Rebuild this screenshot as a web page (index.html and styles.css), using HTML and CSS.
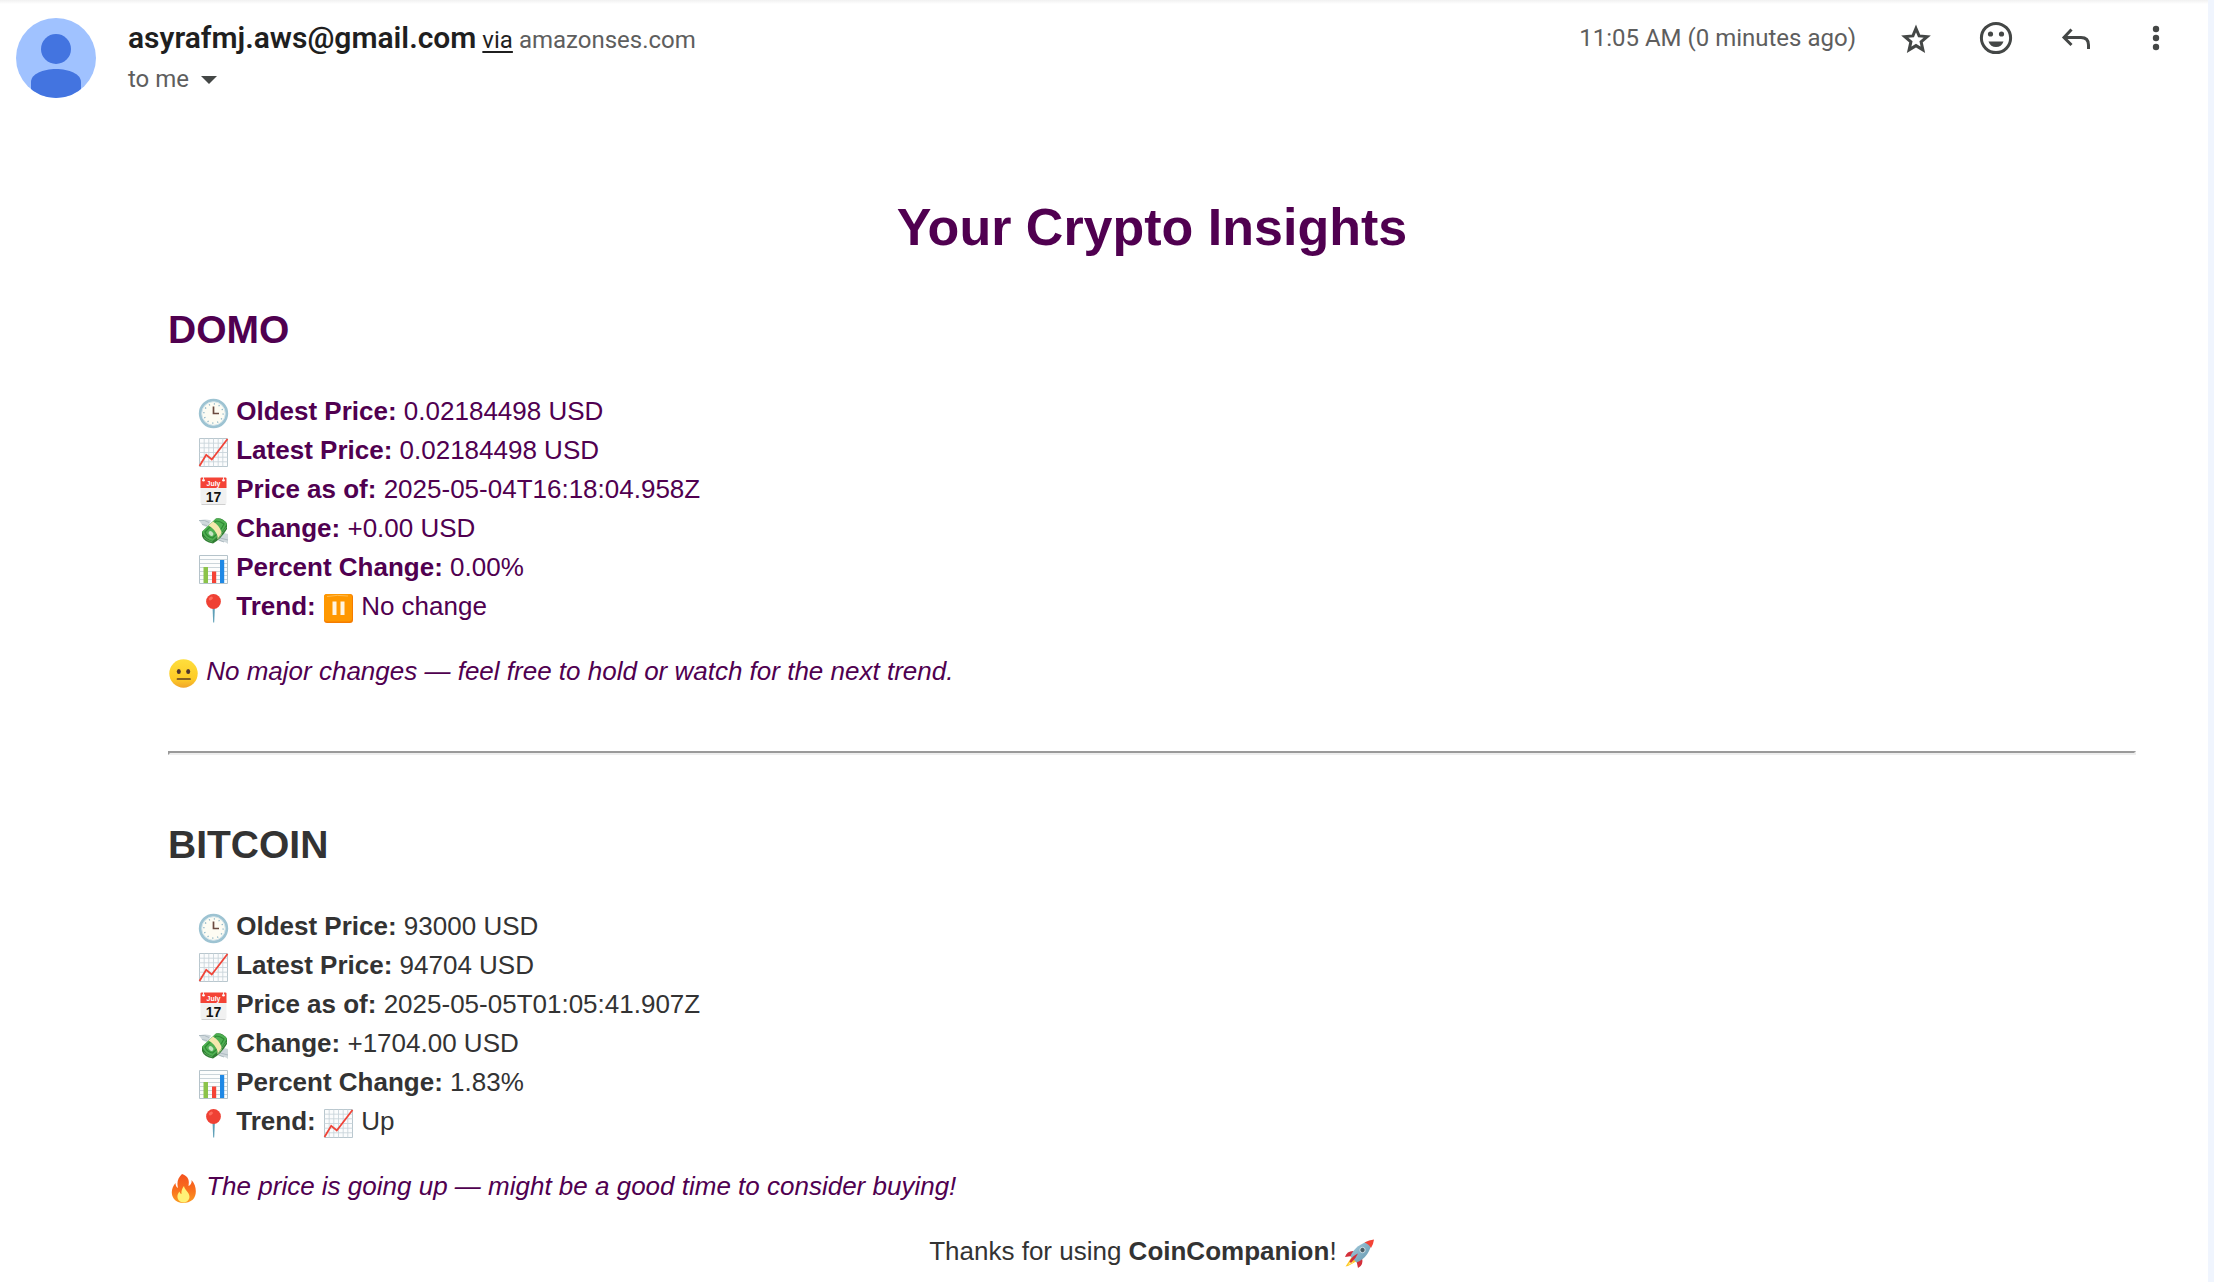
FILE: index.html
```html
<!DOCTYPE html>
<html lang="en">
<head>
<meta charset="utf-8">
<meta name="viewport" content="width=device-width, initial-scale=1">
<title>Your Crypto Insights</title>
<link rel="stylesheet" href="styles.css">
</head>
<body>
<svg class="sprite" aria-hidden="true">
  <defs>
    <linearGradient id="g-fire" x1="0" y1="0" x2="0" y2="1"><stop offset="0" stop-color="#f4511e"/><stop offset=".55" stop-color="#f9701d"/><stop offset="1" stop-color="#fb9b21"/></linearGradient>
    <linearGradient id="g-face" x1="0" y1="0" x2="0" y2="1"><stop offset="0" stop-color="#fede3d"/><stop offset=".7" stop-color="#fdcb26"/><stop offset="1" stop-color="#f0a42c"/></linearGradient>
    <linearGradient id="g-rocket" x1="0" y1="0" x2="1" y2="1"><stop offset="0" stop-color="#a9cfe0"/><stop offset="1" stop-color="#5f93ab"/></linearGradient>
    <symbol id="clock" viewBox="0 0 31 31">
      <circle cx="15.5" cy="15.5" r="13.2" fill="#fdfcf3" stroke="#9dc3d2" stroke-width="3"/>
      <circle cx="15.5" cy="15.5" r="11.8" fill="none" stroke="#d5e6ec" stroke-width="1"/>
      <circle cx="15.5" cy="15.5" r="9.6" fill="none" stroke="#8fb6c8" stroke-width="1.4" stroke-dasharray="1.2 3.827"/>
      <path d="M15.500 8.500V15.500H21" fill="none" stroke="#6b4a40" stroke-width="1.700"/>
    </symbol>
    <symbol id="chart-up" viewBox="0 0 31 31">
      <path d="M1.500 1.500h28v28h-28z" fill="#fbfcfd" stroke="#b9c7ce" stroke-width="1"/>
      <path d="M6.200 1.500v28M10.800 1.500v28M15.500 1.500v28M20.200 1.500v28M24.800 1.500v28M1.500 6.200h28M1.500 10.800h28M1.500 15.500h28M1.500 20.200h28M1.500 24.800h28" stroke="#c9d5db" stroke-width=".9"/>
      <path d="M1.500 29L8.200 17.800L13.800 22.500L29.500 2" fill="none" stroke="#f04438" stroke-width="1.800"/>
    </symbol>
    <symbol id="calendar" viewBox="0 0 31 31">
      <path d="M2.500 8h26v18.500a2 2 0 0 1-2 2h-22a2 2 0 0 1-2-2z" fill="#f1f1f1"/>
      <path d="M3.500 28.500h24" stroke="#cfcfcf" stroke-width="1"/>
      <path d="M3.500 1.500h24a1 1 0 0 1 1 1v9.500h-26v-9.500a1 1 0 0 1 1-1z" fill="#f44336"/>
      <circle cx="5.500" cy="4.200" r="1.300" fill="#fff"/><circle cx="25.500" cy="4.200" r="1.300" fill="#fff"/>
      <path d="M5.500 4V1M25.500 4V1" stroke="#eee" stroke-width="1"/>
      <text x="15.500" y="9.500" class="cal-month">July</text>
      <text x="15.500" y="25.500" class="cal-day">17</text>
    </symbol>
    <symbol id="money" viewBox="0 0 31 31">
      <path d="M1 5.500q6-2 12 0l-3 7q-4-1-6-3zM18 22q5 0 8-4l4 1v10q-2-2-4-2t-7-2z" fill="#cfd8dc"/>
      <path d="M1 5.500q6-1 10 2M4 9.500l5 1M22 23l8 2M21 25l5 2" stroke="#aebbc2" fill="none"/>
      <path d="M4 17L18 3.500Q24 2 29 8.500V14Q23 24 15 28.500Q6 27 4 21z" fill="#2f7d32"/>
      <path d="M4 16.500L18 3.500Q24 3 29 8.500Q24 19 14.500 26Q7 24 4 16.500z" fill="#4fb052"/>
      <path d="M7 17L18 6Q22 6 26 9Q22 17 14.500 23Q9 22 7 17z" fill="none" stroke="#2f8b35" stroke-width="1.200"/>
      <path d="M10.500 10.500L15 6.500Q21 10 23.500 17V20L19.500 24.500V21Q17 14 10.500 10.500z" fill="#f6e8ae"/>
      <ellipse cx="13" cy="18.500" rx="2.700" ry="2" fill="#c6e5c3" transform="rotate(40 13 18.500)"/>
      <path d="M6 22.500Q10 26 14.500 27M20 23.500L28.500 12" fill="none" stroke="#66b268" stroke-width=".8"/>
    </symbol>
    <symbol id="bars" viewBox="0 0 31 31">
      <path d="M1.500 1.500h28v28h-28z" fill="#fcfdfd" stroke="#b5c3ca"/>
      <path d="M2 5.500h27M2 9.500h27M2 13.500h27M2 17.500h27M2 21.500h27M2 25.500h27" stroke="#cbd5da" stroke-width="1"/>
      <path d="M5.500 13h4.500v16h-4.500z" fill="#8bc34a"/><path d="M14 17.500h4.200v11.500h-4.200z" fill="#f44336"/><path d="M22 6h4.200v23h-4.200z" fill="#1e88e5"/>
    </symbol>
    <symbol id="pin" viewBox="0 0 31 31">
      <path d="M14.500 14h2.400l-.7 15.500h-1z" fill="#5fa0b8"/>
      <circle cx="15.500" cy="8.500" r="7.400" fill="#ef4134"/>
      <ellipse cx="12.800" cy="5.500" rx="2.300" ry="1.500" fill="#ff6b5c" transform="rotate(-35 12.800 5.500)"/>
    </symbol>
    <symbol id="pause" viewBox="0 0 31 31">
      <rect x="1" y="1" width="29" height="29" rx="3" fill="#f57c00"/>
      <rect x="1" y="1" width="28" height="27.500" rx="3" fill="#ff9800"/>
      <path d="M4 3.500Q14 1.500 25 3" stroke="#ffbd52" stroke-width="1" fill="none"/>
      <path d="M9.500 8.500h4v13.500h-4zM17.500 8.500h4v13.500h-4z" fill="#fff5e2"/>
    </symbol>
    <symbol id="neutral" viewBox="0 0 31 31">
      <circle cx="15.500" cy="15.500" r="14.200" fill="url(#g-face)"/>
      <ellipse cx="10.800" cy="13.500" rx="2" ry="2.500" fill="#4e342e"/><ellipse cx="20.200" cy="13.500" rx="2" ry="2.500" fill="#4e342e"/>
      <path d="M9.500 21h12.500" stroke="#5a3b20" stroke-width="1.700" stroke-linecap="round"/>
    </symbol>
    <symbol id="fire" viewBox="0 0 31 31">
      <path d="M14 1C22 4 21 9 20.500 13C23 12 24 9.500 23.500 7C29 13 29 22 25 26.500C19 31.500 10 31 6 26C2 20.500 4 14 7.500 10C7.500 12.500 8.500 14.500 10 15C8.500 9 10 5 14 1z" fill="url(#g-fire)"/>
      <path d="M16 13C16.500 17 21.500 19 21.500 24C21 28 18 29.500 15.500 29.500C11 29 9 26 9.500 22.500C9.800 20.500 10.800 19.500 11.500 18.500C11.800 20 12.500 21 13.500 21C13 17.500 14.500 15 16 13z" fill="#fff176"/>
    </symbol>
    <symbol id="rocket" viewBox="0 0 31 31">
      <path d="M9 17L1.500 28.500L4 28L13 23z" fill="#ffca28"/>
      <path d="M7 23L4 27L9 24.500z" fill="#fff59d"/>
      <path d="M11 13Q3 12 1 19L8 18zM18 20Q20 27 14 30L12.500 23z" fill="#d32f3a"/>
      <path d="M6.500 18.500Q11 6 28 2.500Q26 19 12.500 24.500z" fill="url(#g-rocket)"/>
      <path d="M20.500 4.500Q25 2 30 1.500Q29.500 6 27 10Q25 6 20.500 4.500z" fill="#f44336"/>
      <circle cx="18.500" cy="12" r="2.700" fill="#4b5f68" stroke="#dbe9ee" stroke-width=".9"/>
      <path d="M5.500 23.500Q8 18 14 15.500Q12 20.500 7 25z" fill="#d32f3a"/>
    </symbol>
  </defs>
</svg>

<main class="message">
  <header class="message-header">
    <svg class="avatar" viewBox="0 0 80 80" role="img" aria-label="Profile picture">
      <clipPath id="avatar-clip"><circle cx="40" cy="40" r="40"/></clipPath>
      <g clip-path="url(#avatar-clip)">
        <path d="M0 0h80v80H0z" fill="#a0c2ff"/>
        <circle cx="40" cy="31" r="15" fill="#4374e0"/>
        <path d="M15 80V64C15 56 27 51 40 51S65 56 65 64V80z" fill="#4374e0"/>
      </g>
    </svg>
    <div class="sender">
      <div class="sender-line">
        <span class="sender-address">asyrafmj.aws@gmail.com</span>
        <a class="via" href="#via">via</a>
        <span class="relay">amazonses.com</span>
      </div>
      <button class="recipient" type="button">to me
        <svg class="caret" viewBox="0 0 16 8" aria-hidden="true"><path d="M0 0h16l-8 8z" fill="#444746"/></svg>
      </button>
    </div>
    <div class="actions">
      <time class="sent">11:05 AM (0 minutes ago)</time>
      <button class="icon-button" type="button" aria-label="Star">
        <svg viewBox="0 0 40 40"><path d="M20 9.500L23.100 16.900L31.200 17.600L25.100 22.900L26.900 30.800L20 26.600L13.100 30.800L14.900 22.900L8.800 17.600L16.900 16.900z" transform="translate(0 1)" fill="none" stroke="#444746" stroke-width="3"/></svg>
      </button>
      <button class="icon-button" type="button" aria-label="Add reaction">
        <svg viewBox="0 0 40 40"><circle cx="20" cy="20" r="14.600" fill="none" stroke="#444746" stroke-width="3"/><circle cx="14.500" cy="16" r="2.600" fill="#444746"/><circle cx="25.500" cy="16" r="2.600" fill="#444746"/><path d="M12.500 23.500h15q-2 5.500-7.500 5.500t-7.500-5.500z" fill="#444746"/></svg>
      </button>
      <button class="icon-button" type="button" aria-label="Reply">
        <svg viewBox="0 0 40 40"><path d="M15.500 11.500L8 19.500L15.500 27M8 19.500H25Q32.500 19.500 32.500 27V31" fill="none" stroke="#444746" stroke-width="3"/></svg>
      </button>
      <button class="icon-button" type="button" aria-label="More">
        <svg viewBox="0 0 40 40"><circle cx="20" cy="11" r="3.200" fill="#444746"/><circle cx="20" cy="20" r="3.200" fill="#444746"/><circle cx="20" cy="29" r="3.200" fill="#444746"/></svg>
      </button>
    </div>
  </header>

  <article class="email">
    <h1 class="title">Your Crypto Insights</h1>

    <section class="coin quoted">
      <h2 class="coin-name">DOMO</h2>
      <ul class="facts">
        <li><svg class="emoji"><use href="#clock"/></svg> <strong>Oldest Price:</strong> 0.02184498 USD</li>
        <li><svg class="emoji"><use href="#chart-up"/></svg> <strong>Latest Price:</strong> 0.02184498 USD</li>
        <li><svg class="emoji"><use href="#calendar"/></svg> <strong>Price as of:</strong> 2025-05-04T16:18:04.958Z</li>
        <li><svg class="emoji"><use href="#money"/></svg> <strong>Change:</strong> +0.00 USD</li>
        <li><svg class="emoji"><use href="#bars"/></svg> <strong>Percent Change:</strong> 0.00%</li>
        <li><svg class="emoji"><use href="#pin"/></svg> <strong>Trend:</strong> <svg class="emoji"><use href="#pause"/></svg> No change</li>
      </ul>
      <p class="advice"><svg class="emoji"><use href="#neutral"/></svg> <em>No major changes — feel free to hold or watch for the next trend.</em></p>
    </section>

    <hr class="divider">

    <section class="coin">
      <h2 class="coin-name">BITCOIN</h2>
      <ul class="facts">
        <li><svg class="emoji"><use href="#clock"/></svg> <strong>Oldest Price:</strong> 93000 USD</li>
        <li><svg class="emoji"><use href="#chart-up"/></svg> <strong>Latest Price:</strong> 94704 USD</li>
        <li><svg class="emoji"><use href="#calendar"/></svg> <strong>Price as of:</strong> 2025-05-05T01:05:41.907Z</li>
        <li><svg class="emoji"><use href="#money"/></svg> <strong>Change:</strong> +1704.00 USD</li>
        <li><svg class="emoji"><use href="#bars"/></svg> <strong>Percent Change:</strong> 1.83%</li>
        <li><svg class="emoji"><use href="#pin"/></svg> <strong>Trend:</strong> <svg class="emoji"><use href="#chart-up"/></svg> Up</li>
      </ul>
      <p class="advice"><svg class="emoji"><use href="#fire"/></svg> <em>The price is going up — might be a good time to consider buying!</em></p>
    </section>

    <p class="thanks">Thanks for using <strong>CoinCompanion</strong>! <svg class="emoji"><use href="#rocket"/></svg></p>
  </article>
</main>
</body>
</html>
```
FILE: styles.css
```css
* {
  box-sizing: border-box;
}

body {
  margin: 0;
  padding-right: 6px;
  background: #f0f5fe;
  font-family: "Liberation Sans", Arial, sans-serif;
}

.sprite {
  position: absolute;
  width: 0;
  height: 0;
}

.message {
  min-height: 100vh;
  background: linear-gradient(#f1f1f1, #fff 4px);
}

.message-header {
  display: flex;
  align-items: flex-start;
  padding: 18px 32px 0 16px;
  font-family: Roboto, sans-serif;
  font-size: 24px;
  color: #5e5e5e;
}

.avatar {
  flex: none;
  width: 80px;
  height: 80px;
  margin-right: 32px;
}

.sender {
  flex: 1;
}

.sender-line,
.recipient {
  display: flex;
  align-items: baseline;
  gap: 6px;
  line-height: 39px;
}

.sender-address {
  font-size: 30px;
  font-weight: 600;
  color: #1f1f1f;
}

.via {
  color: #1f1f1f;
  text-underline-offset: 3px;
}

button {
  padding: 0;
  border: 0;
  background: none;
  font: inherit;
  color: inherit;
}

.recipient {
  align-items: center;
  gap: 12px;
}

.caret {
  width: 16px;
  height: 8px;
}

.actions {
  display: flex;
  align-items: center;
  gap: 40px;
  line-height: 40px;
}

.icon-button,
.icon-button svg {
  display: block;
  width: 40px;
  height: 40px;
}

.email {
  padding: 89px 72px 11px 168px;
  font-size: 26px;
  line-height: 39px;
  color: #333;
}

.title {
  margin: 0 0 34px;
  font-size: 52px;
  line-height: 78px;
  text-align: center;
  color: #500050;
}

.quoted,
.advice {
  color: #500050;
}

.coin-name {
  margin: 0 0 33px;
  font-size: 39px;
  line-height: 59px;
}

.facts {
  margin: 0;
  padding: 0 0 0 30px;
  list-style: none;
}

.advice,
.thanks {
  margin: 26px 0 0;
}

.divider {
  height: 4px;
  margin: 60px 0;
  border: 2px solid;
  border-color: #9a9a9a #eee #eee #9a9a9a;
}

.thanks {
  text-align: center;
}

.emoji {
  width: 31px;
  height: 31px;
  vertical-align: -9px;
}

li,
p {
  height: 39px;
}

.cal-month {
  font: bold 7px "Liberation Sans", sans-serif;
  fill: #fff;
  text-anchor: middle;
}

.cal-day {
  font: bold 14px "Liberation Sans", sans-serif;
  fill: #111;
  text-anchor: middle;
}
```
